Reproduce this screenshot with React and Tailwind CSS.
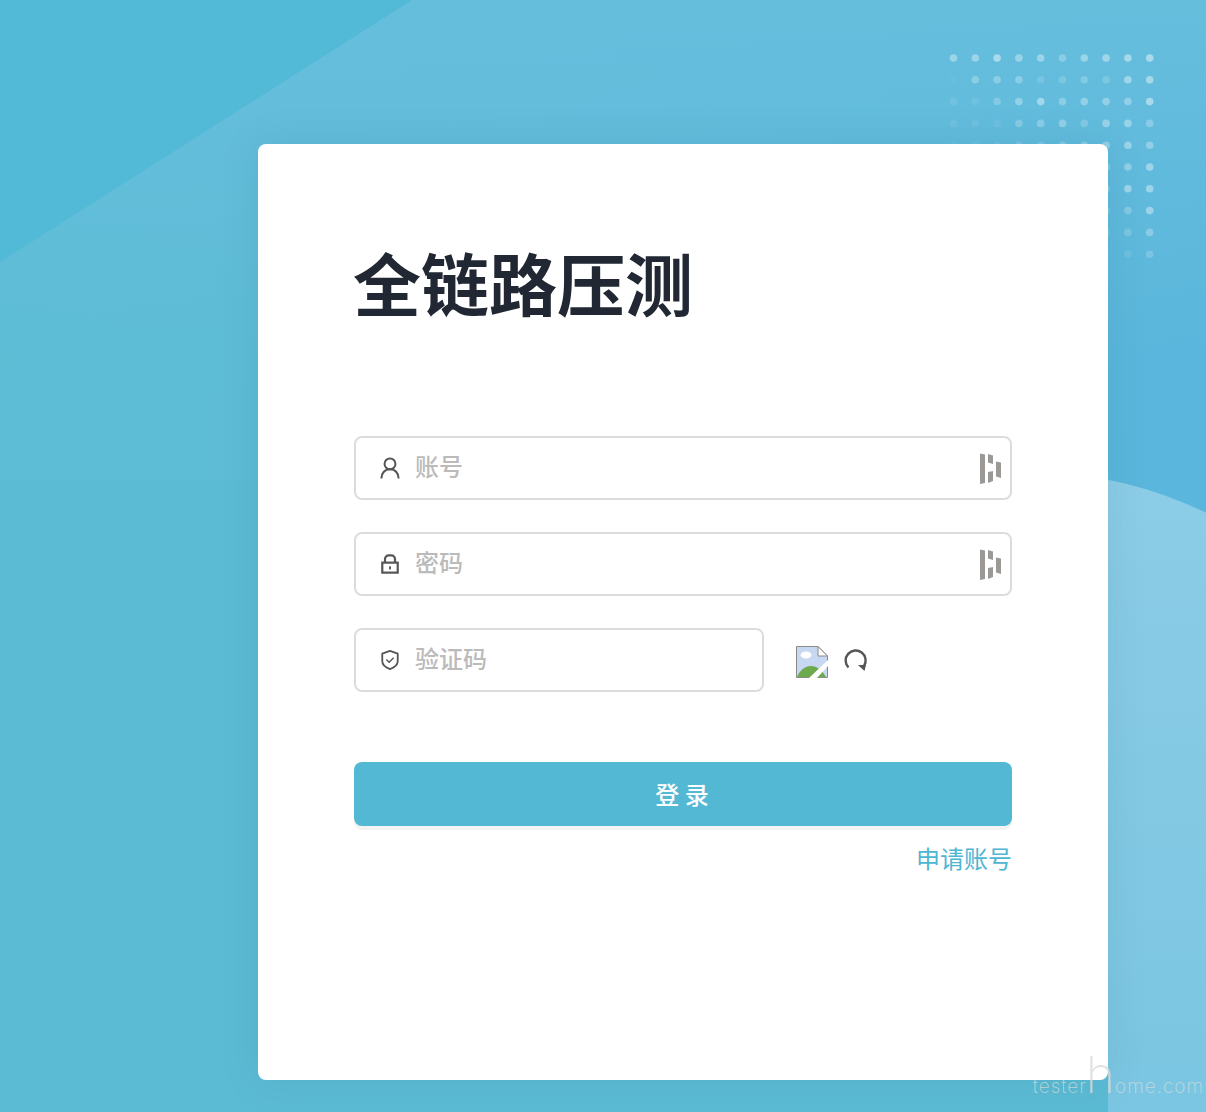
import React from "react";

const cjk = { fontFamily: '"Noto Sans CJK SC", "Noto Sans", sans-serif' };

const dotRows = [
    [0.35, 0.35, 0.45, 0.35, 0.35, 0.25, 0.35, 0.38, 0.42, 0.45],
    [0.03, 0.25, 0.25, 0.25, 0.12, 0.16, 0.2, 0.16, 0.38, 0.42],
    [0.1, 0.08, 0.2, 0.3, 0.4, 0.25, 0.3, 0.3, 0.3, 0.45],
    [0.08, 0.07, 0.07, 0.22, 0.25, 0.3, 0.2, 0.34, 0.34, 0.25],
    [0.06, 0.06, 0.08, 0.15, 0.15, 0.2, 0.25, 0.3, 0.36, 0.3],
    [0, 0, 0, 0, 0, 0, 0, 0.25, 0.3, 0.38],
    [0, 0, 0, 0, 0, 0, 0, 0.2, 0.38, 0.38],
    [0, 0, 0, 0, 0, 0, 0, 0.16, 0.22, 0.38],
    [0, 0, 0, 0, 0, 0, 0, 0.1, 0.18, 0.26],
    [0, 0, 0, 0, 0, 0, 0, 0.04, 0.1, 0.18],
];

function Backdrop() {
    return (
        <svg className="absolute inset-0" width="1206" height="1112" viewBox="0 0 1206 1112">
            <defs>
                <linearGradient id="page" x1="0" y1="0" x2="1" y2="0.15">
                    <stop offset="0" stopColor="#5dbdd5" />
                    <stop offset="0.45" stopColor="#5ebbd7" />
                    <stop offset="1" stopColor="#5ab6dc" />
                </linearGradient>
                <linearGradient id="top" x1="0" y1="0" x2="0" y2="1">
                    <stop offset="0" stopColor="#66bedd" stopOpacity="1" />
                    <stop offset="1" stopColor="#66bedd" stopOpacity="0" />
                </linearGradient>
                <linearGradient id="blob" x1="0" y1="0" x2="0" y2="1">
                    <stop offset="0" stopColor="#8ccce6" />
                    <stop offset="1" stopColor="#76c4e1" />
                </linearGradient>
            </defs>
            <rect width="1206" height="1112" fill="url(#page)" />
            <rect width="1206" height="360" fill="url(#top)" />
            <polygon points="0,0 412,0 0,262" fill="#52b9d6" />
            <circle cx="1030" cy="872" r="400" fill="url(#blob)" />
            <rect x="0" y="480" width="1108" height="632" fill="#5cbbd4" />
            <g fill="#ffffff">
                {dotRows.map((row, r) =>
                    row.map((o, c) =>
                        o > 0 ? (
                            <circle
                                key={`${r}-${c}`}
                                cx={953.5 + c * 21.8}
                                cy={58 + r * 21.8}
                                r="3.8"
                                opacity={o}
                            />
                        ) : null
                    )
                )}
            </g>
        </svg>
    );
}

function UserIcon() {
    return (
        <svg width="22" height="24" viewBox="0 0 22 24" fill="none" stroke="#555" strokeWidth="2.200">
            <circle cx="11" cy="7.500" r="6" />
            <path d="M1.500 23.500c0-5.500 3.500-10 9.500-10s9.500 4.500 9.500 10" />
        </svg>
    );
}

function LockIcon() {
    return (
        <svg width="22" height="24" viewBox="0 0 22 24" fill="none" stroke="#555" strokeWidth="2.400">
            <path d="M5.500 10V6.500a4 4 0 0 1 4-4h3a4 4 0 0 1 4 4V10" />
            <rect x="2.500" y="10.500" width="17" height="11" />
            <rect x="10" y="14.500" width="2" height="3.500" fill="#555" stroke="none" />
        </svg>
    );
}

function ShieldIcon() {
    return (
        <svg width="22" height="24" viewBox="0 0 22 24" fill="none" stroke="#555" strokeWidth="2">
            <path d="M11 2 19.500 5v8.500c0 4-4 7-8.500 8.500-4.500-1.500-8.500-4.500-8.500-8.500V5z" strokeLinejoin="round" />
            <path d="m7 11.500 3 3 5-5" strokeWidth="1.500" />
        </svg>
    );
}

function BarsIcon() {
    return (
        <svg className="absolute right-[8px] top-[15px]" width="23" height="32" viewBox="0 0 23 32" fill="#9c9896">
            <polygon points="1,0.500 6,1.500 6,30 1,31" />
            <polygon points="9,1 14,2.500 14,11 9,9.500" />
            <polygon points="9,19 14,18 14,28 9,30" />
            <polygon points="17,8.500 22,9.500 22,25 17,23.500" />
        </svg>
    );
}

function BrokenImage() {
    return (
        <svg className="mt-1" width="32" height="32" viewBox="0 0 32 32">
            <path d="M0.500 0.500H22L31.500 10V31.500H0.500z" fill="#c8d7f2" stroke="#8a8a8a" />
            <path d="M22 0.500V10H31.500z" fill="#fff" stroke="#8a8a8a" />
            <ellipse cx="10" cy="9" rx="5.500" ry="3.500" fill="#fff" />
            <path d="M1 31C4 24 9 20 15 20c6 0 11 4 15 11z" fill="#6daa4d" />
            <path d="M13 32 32 14V20L21 32z" fill="#fff" />
        </svg>
    );
}

function RefreshIcon() {
    return (
        <svg width="24" height="24" viewBox="0 0 24 24" fill="none" stroke="#555" strokeWidth="2.400">
            <path d="M4.500 19.500A10 10 0 1 1 20 18" />
            <path d="M14 17h8l-1.500 6z" fill="#555" stroke="none" />
        </svg>
    );
}

function Field({ icon, placeholder, width, bars }) {
    return (
        <div className={`relative flex h-16 items-center rounded-lg border-2 border-[#dcdcdc] bg-white pl-6 ${width}`}>
            <span className="flex w-5 shrink-0 justify-center">{icon}</span>
            <input
                type="text"
                placeholder={placeholder}
                className="mb-1 ml-[15px] min-w-0 flex-1 bg-transparent text-2xl font-medium text-[#333] outline-none placeholder:text-[#bbbbbb]"
                style={cjk}
            />
            {bars && <BarsIcon />}
        </div>
    );
}

export default function App() {
    return (
        <div className="relative h-[1112px] w-[1206px] overflow-hidden pl-[258px] pt-[144px]" style={cjk}>
            <Backdrop />

            {/* Login card */}
            <div className="relative flex h-[936px] w-[850px] flex-col rounded-lg bg-white pl-24 pr-24 shadow-[0_0_40px_rgba(20,80,110,0.10)]">
                <h1 className="-ml-px mt-[90px] h-[202px] text-[68px] font-bold leading-[96px] text-[#212833]">全链路压测</h1>

                <div className="flex flex-col gap-8">
                    <Field icon={<UserIcon />} placeholder="账号" width="w-full" bars />
                    <Field icon={<LockIcon />} placeholder="密码" width="w-full" bars />
                    <div className="flex items-center">
                        <Field icon={<ShieldIcon />} placeholder="验证码" width="w-[410px]" />
                        <div className="ml-8 flex items-center gap-4">
                            <BrokenImage />
                            <RefreshIcon />
                        </div>
                    </div>
                </div>

                <button className="mt-[70px] h-16 w-full rounded-lg bg-[#53b8d4] text-2xl font-medium text-white shadow-[0_4px_0_#f3f3f3]">
                    <span className="-ml-0.5">登 录</span>
                </button>
                <a href="#" className="mt-[14px] self-end text-2xl leading-9 text-[#4db6d3]">
                    申请账号
                </a>
            </div>

            {/* Watermark */}
            <div
                className="absolute bottom-[12px] right-[2px] flex items-baseline text-[19px] font-extralight leading-none tracking-[1px] text-[#d9dcd8]/80"
                style={{ fontFamily: 'Inter, "Liberation Sans", sans-serif' }}
            >
                <span>tester</span>
                <span className="-mx-px text-[50px] leading-none">h</span>
                <span>ome.com</span>
            </div>
        </div>
    );
}
